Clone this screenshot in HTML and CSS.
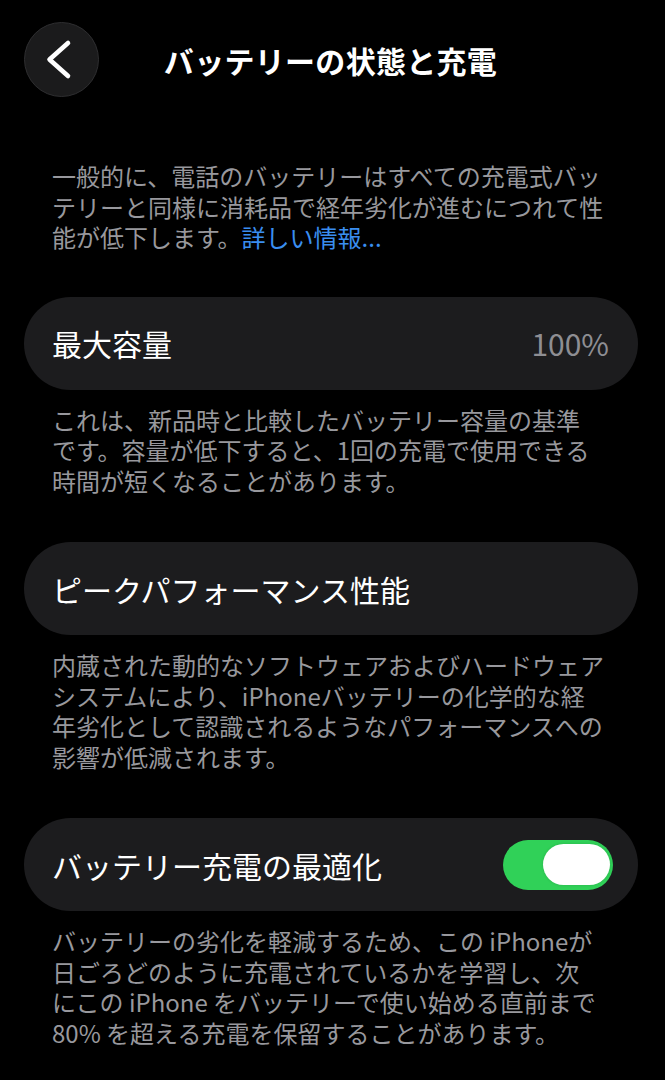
FILE: index.html
```html
<!DOCTYPE html>
<html lang="ja">
<head>
<meta charset="utf-8">
<title>バッテリーの状態と充電</title>
<link rel="stylesheet" href="styles.css">
</head>
<body>
<header class="nav">
  <button class="back" aria-label="戻る">
    <svg width="75" height="75" viewBox="0 0 75 75"><path d="M44 21 L25.5 37.5 L44 54" fill="none" stroke="#fff" stroke-width="4.6" stroke-linecap="round" stroke-linejoin="round"/></svg>
  </button>
  <h1 class="title">バッテリーの状態と充電</h1>
  <span class="spacer"></span>
</header>
<main class="content">
  <p class="note intro">一般的に、電話のバッテリーはすべての充電式バッ<br>テリーと同様に消耗品で経年劣化が進むにつれて性<br>能が低下します。<a class="link" href="#">詳しい情報...</a></p>

  <div class="card">
    <span class="label">最大容量</span>
    <span class="value">100%</span>
  </div>
  <p class="note">これは、新品時と比較したバッテリー容量の基準<br>です。容量が低下すると、1回の充電で使用できる<br>時間が短くなることがあります。</p>

  <div class="card">
    <span class="label">ピークパフォーマンス性能</span>
  </div>
  <p class="note">内蔵された動的なソフトウェアおよびハードウェア<br>システムにより、iPhoneバッテリーの化学的な経<br>年劣化として認識されるようなパフォーマンスへの<br>影響が低減されます。</p>

  <div class="card">
    <span class="label">バッテリー充電の最適化</span>
    <span class="toggle on"><span class="knob"></span></span>
  </div>
  <p class="note">バッテリーの劣化を軽減するため、この iPhoneが<br>日ごろどのように充電されているかを学習し、次<br>にこの iPhone をバッテリーで使い始める直前まで<br>80% を超える充電を保留することがあります。</p>
</main>
</body>
</html>
```

FILE: styles.css
```css
html, body {
  margin: 0;
  padding: 0;
  background: #000;
}
body {
  width: 665px;
  min-height: 1080px;
  font-family: "Noto Sans CJK JP", "Noto Sans", sans-serif;
  color: #fff;
}
.nav {
  display: grid;
  grid-template-columns: 75px 1fr 75px;
  align-items: center;
  padding: 22px 24px 0 24px;
  height: 75px;
}
.back {
  width: 75px;
  height: 75px;
  padding: 0;
  border-radius: 50%;
  background: #1b1b1c;
  border: 1px solid #2e2e30;
  box-sizing: border-box;
  display: flex;
  align-items: center;
  justify-content: center;
}
.back svg {
  display: block;
  margin: -1px;
}
.title {
  margin: 0;
  text-align: center;
  font-size: 30px;
  font-weight: 600;
  line-height: 40px;
  letter-spacing: 0.3px;
  padding-top: 1px;
  padding-right: 4px;
}
.content {
  padding: 0 27px 0 24px;
}
.note {
  margin: 15px 0 46px 0;
  padding: 0 28px;
  font-size: 24px;
  line-height: 30.5px;
  color: #98989d;
  white-space: nowrap;
}
.note.intro {
  margin-top: 64px;
  margin-bottom: 44px;
}
.link {
  color: #3a8ef0;
  text-decoration: none;
}
.card {
  height: 93px;
  border-radius: 46.5px;
  background: #1c1c1e;
  display: flex;
  align-items: center;
  justify-content: space-between;
  padding: 0 25px 0 28px;
}
.label {
  font-size: 30px;
  line-height: 40px;
  color: #fff;
}
.value {
  font-size: 30px;
  line-height: 40px;
  color: #8e8e93;
  margin-right: 4px;
}
.toggle {
  width: 110px;
  height: 50px;
  border-radius: 25px;
  background: #30d158;
  display: flex;
  align-items: center;
  justify-content: flex-end;
  padding: 0 3px;
  box-sizing: border-box;
}
.knob {
  width: 67px;
  height: 41px;
  border-radius: 20.5px;
  background: #fff;
  box-shadow: 0 0 3px rgba(0, 0, 0, 0.15);
}
```
